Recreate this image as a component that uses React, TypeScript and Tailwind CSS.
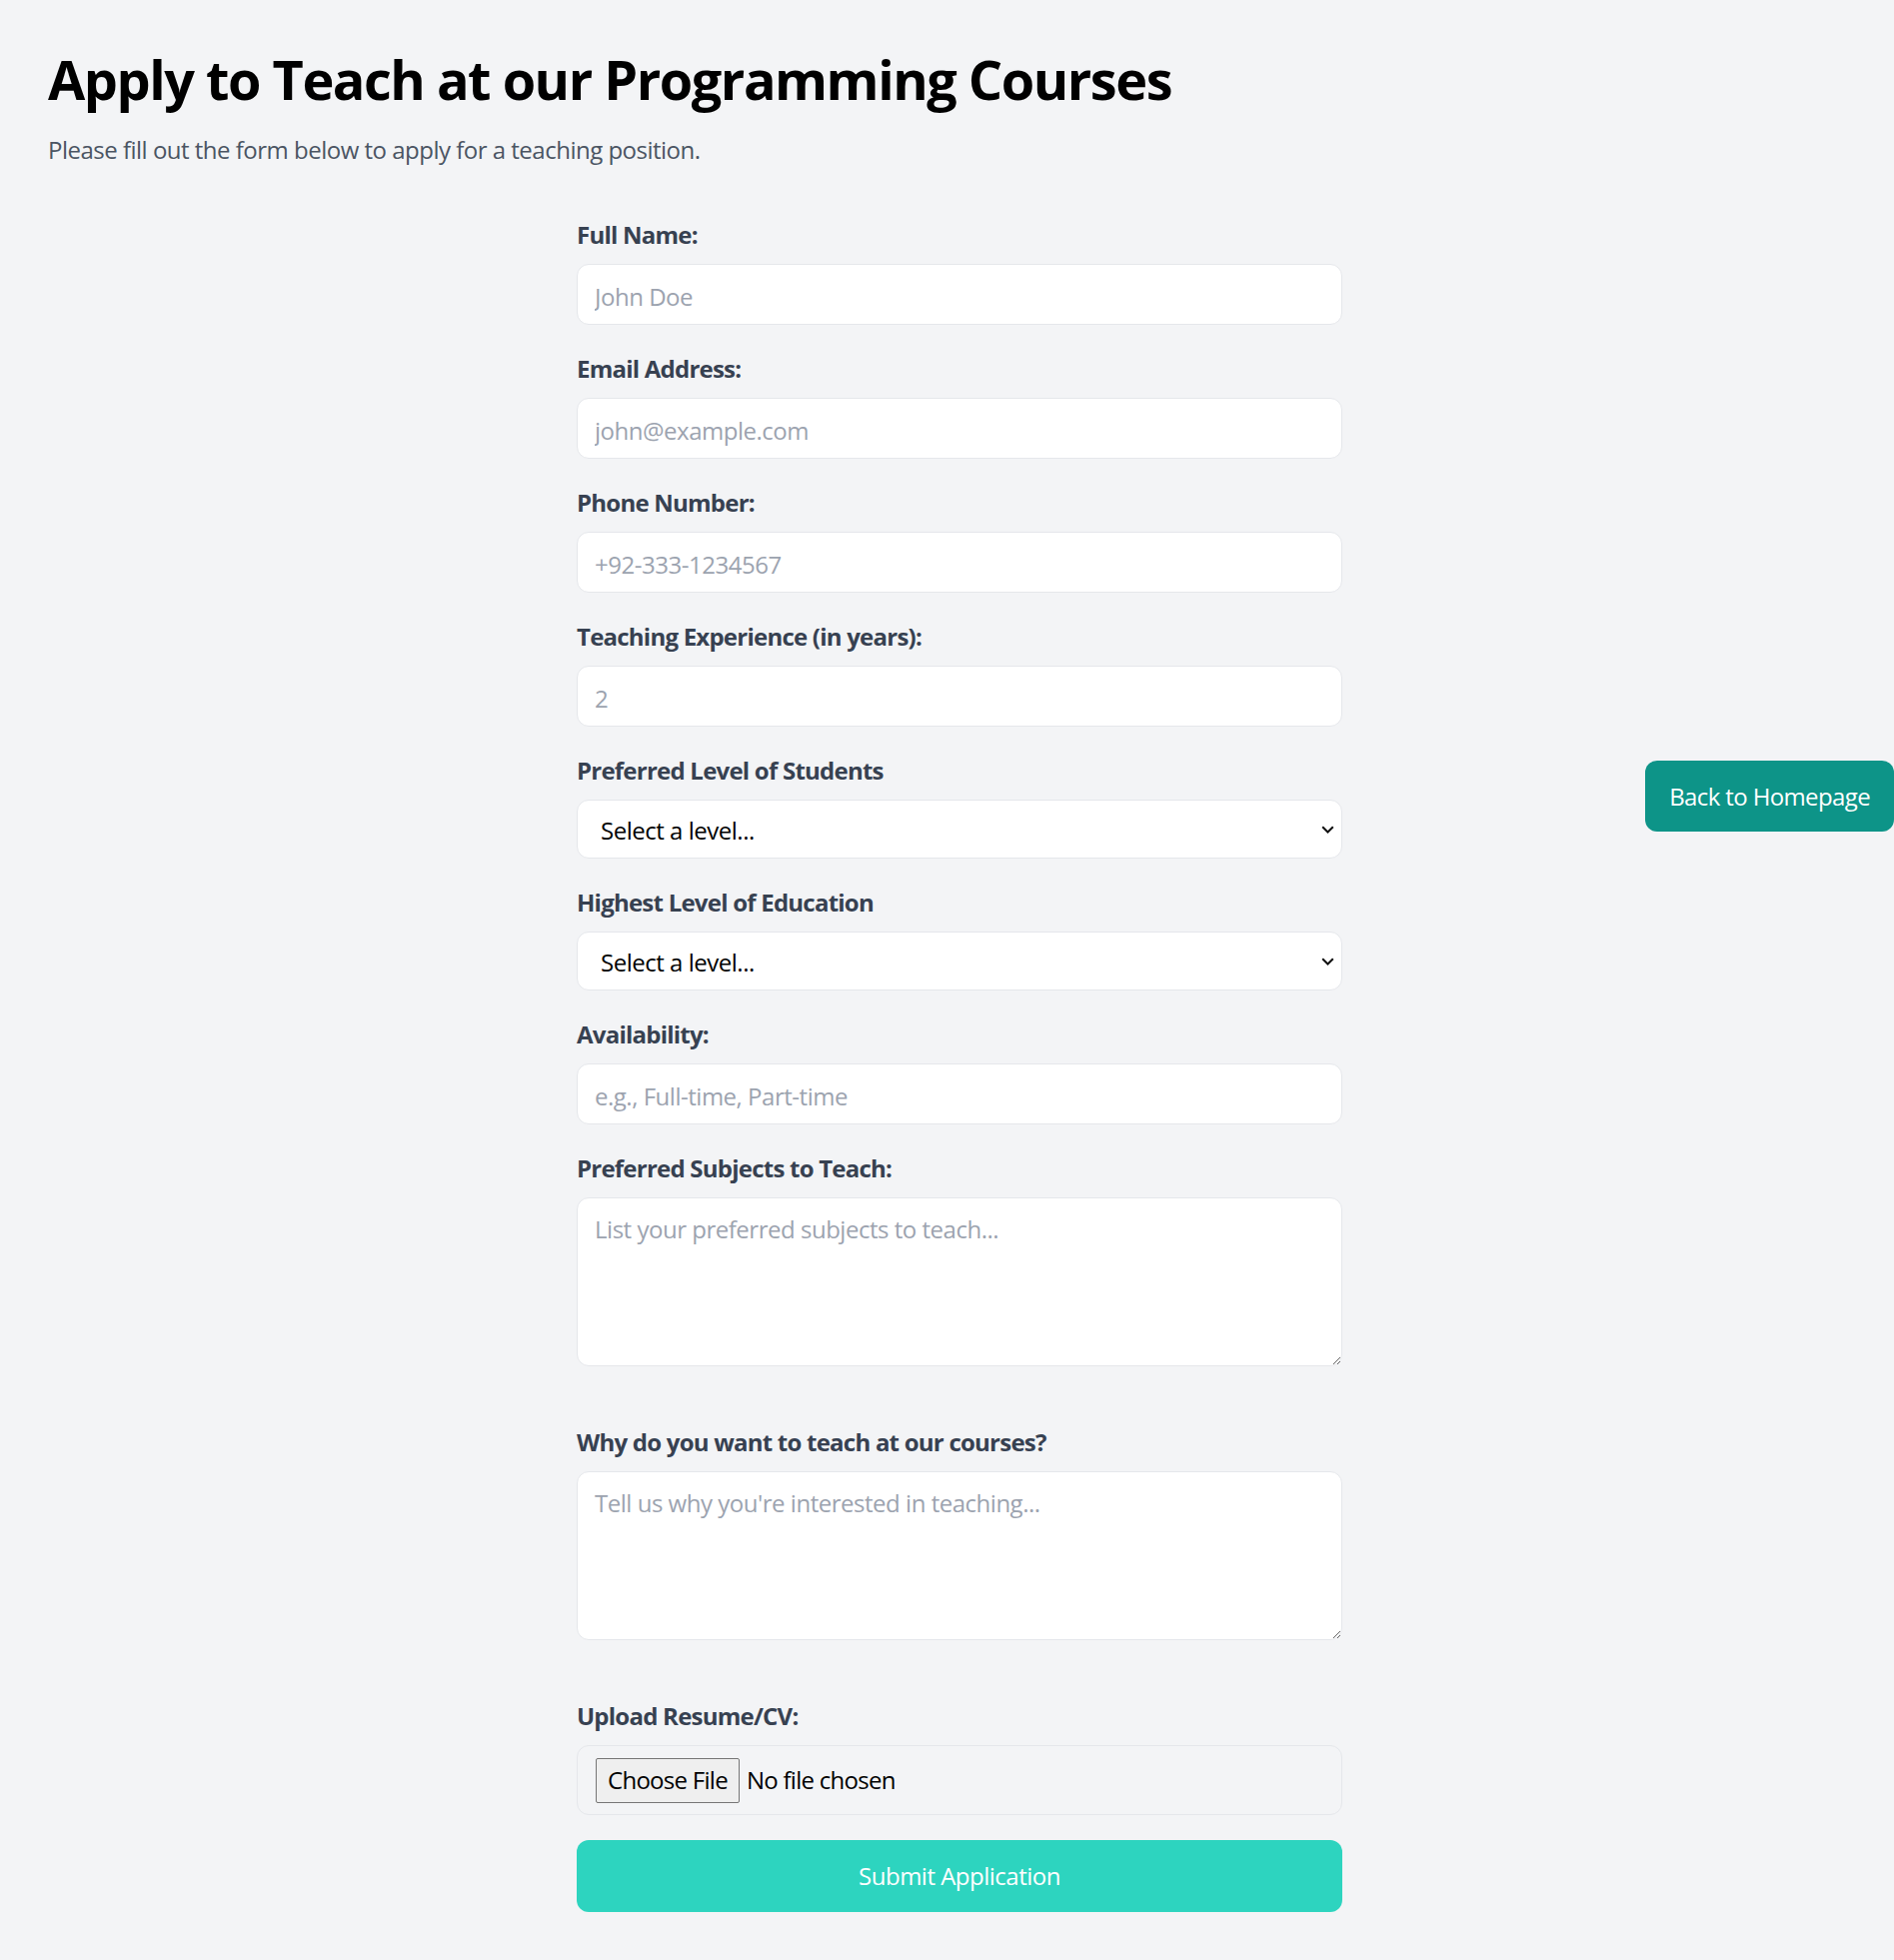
import { ChangeEvent, useState } from 'react';

const inputCls =
  'block h-[61px] w-full rounded-[12px] border border-[#e5e7eb] bg-white px-[17px] pt-[4px] text-[24px] tracking-[-0.02em] text-[#111827] placeholder:text-[#9ca3af] outline-none focus:border-[#2dd4bf]';
const labelCls = 'mb-[12px] block pt-[1px] text-[24px] font-bold leading-[35px] tracking-[-0.032em] text-[#374151]';

function Field({ label, children, last }: { label: string; children: React.ReactNode; last?: boolean }) {
  return (
    <div className={last ? 'mb-[57px]' : 'mb-[25px]'}>
      <label className={labelCls}>{label}</label>
      {children}
    </div>
  );
}

function LevelSelect({ options }: { options: string[] }) {
  return (
    <div className="relative">
      <select
        defaultValue=""
        className="block h-[59px] w-full appearance-none rounded-[12px] border border-[#e5e7eb] bg-white pl-[23px] pt-[3px] text-[24px] tracking-[-0.02em] text-black outline-none"
      >
        <option value="" disabled>
          Select a level...
        </option>
        {options.map((o) => (
          <option key={o}>{o}</option>
        ))}
      </select>
      <svg
        width="13"
        height="8"
        viewBox="0 0 13 8"
        className="pointer-events-none absolute right-[8px] top-1/2 -translate-y-1/2"
      >
        <path d="M1.2 1.2 L6.5 6.5 L11.8 1.2" fill="none" stroke="#111" strokeWidth="2" />
      </svg>
    </div>
  );
}

export default function App() {
  const [fileName, setFileName] = useState('');

  const onFile = (e: ChangeEvent<HTMLInputElement>) => {
    setFileName(e.target.files?.[0]?.name ?? '');
  };

  return (
    <div className="relative min-h-screen bg-[#f3f4f6] px-[48px] pt-[49px] pb-[48px] font-['Open_Sans',sans-serif]">
      <h1 className="text-[54px] font-bold leading-[60px] tracking-[-0.027em] text-black">
        Apply to Teach at our Programming Courses
      </h1>
      <p className="mt-[23px] text-[24px] leading-[36px] tracking-[-0.021em] text-[#4b5563]">
        Please fill out the form below to apply for a teaching position.
      </p>

      <div className="-mx-[48px] mt-[48px] flex justify-center pl-[25px]">
        <form className="w-[766px]" onSubmit={(e) => e.preventDefault()}>
          <Field label="Full Name:">
            <input type="text" placeholder="John Doe" className={inputCls} />
          </Field>
          <Field label="Email Address:">
            <input type="email" placeholder="john@example.com" className={inputCls} />
          </Field>
          <Field label="Phone Number:">
            <input type="tel" placeholder="+92-333-1234567" className={inputCls} />
          </Field>
          <Field label="Teaching Experience (in years):">
            <input type="number" placeholder="2" className={inputCls} />
          </Field>
          <Field label="Preferred Level of Students">
            <LevelSelect options={['Beginner', 'Intermediate', 'Advanced']} />
          </Field>
          <Field label="Highest Level of Education">
            <LevelSelect options={["Bachelor's", "Master's", 'PhD']} />
          </Field>
          <Field label="Availability:">
            <input type="text" placeholder="e.g., Full-time, Part-time" className={inputCls} />
          </Field>
          <Field label="Preferred Subjects to Teach:" last>
            <textarea
              placeholder="List your preferred subjects to teach..."
              className="block h-[169px] w-full rounded-[12px] border border-[#e5e7eb] bg-white px-[17px] pt-[13px] text-[24px] leading-[36px] tracking-[-0.02em] text-[#111827] placeholder:text-[#9ca3af] outline-none"
            />
          </Field>
          <Field label="Why do you want to teach at our courses?" last>
            <textarea
              placeholder="Tell us why you're interested in teaching..."
              className="block h-[169px] w-full rounded-[12px] border border-[#e5e7eb] bg-white px-[17px] pt-[13px] text-[24px] leading-[36px] tracking-[-0.02em] text-[#111827] placeholder:text-[#9ca3af] outline-none"
            />
          </Field>

          <div className="mb-[25px]">
            <label className={labelCls}>Upload Resume/CV:</label>
            <label className="flex h-[70px] w-full cursor-pointer items-center rounded-[12px] border border-[#e5e7eb] bg-[#f3f4f6] pl-[18px]">
              <input type="file" className="hidden" onChange={onFile} />
              <span className="flex h-[45px] items-center rounded-[2px] border border-[#767676] bg-[#efefef] px-[11px] text-[24px] tracking-[-0.03em] text-black">
                Choose File
              </span>
              <span className="ml-[7px] text-[24px] tracking-[-0.03em] text-black">
                {fileName || 'No file chosen'}
              </span>
            </label>
          </div>

          <button
            type="submit"
            className="block h-[72px] w-full rounded-[12px] bg-[#2dd4bf] text-[24px] tracking-[-0.021em] text-white"
          >
            Submit Application
          </button>
        </form>
      </div>

      <a
        href="#"
        className="absolute right-0 top-[761px] flex h-[71px] items-center rounded-[12px] bg-[#0d9488] px-[24px] text-[24px] tracking-[-0.026em] text-white"
      >
        Back to Homepage
      </a>
    </div>
  );
}
